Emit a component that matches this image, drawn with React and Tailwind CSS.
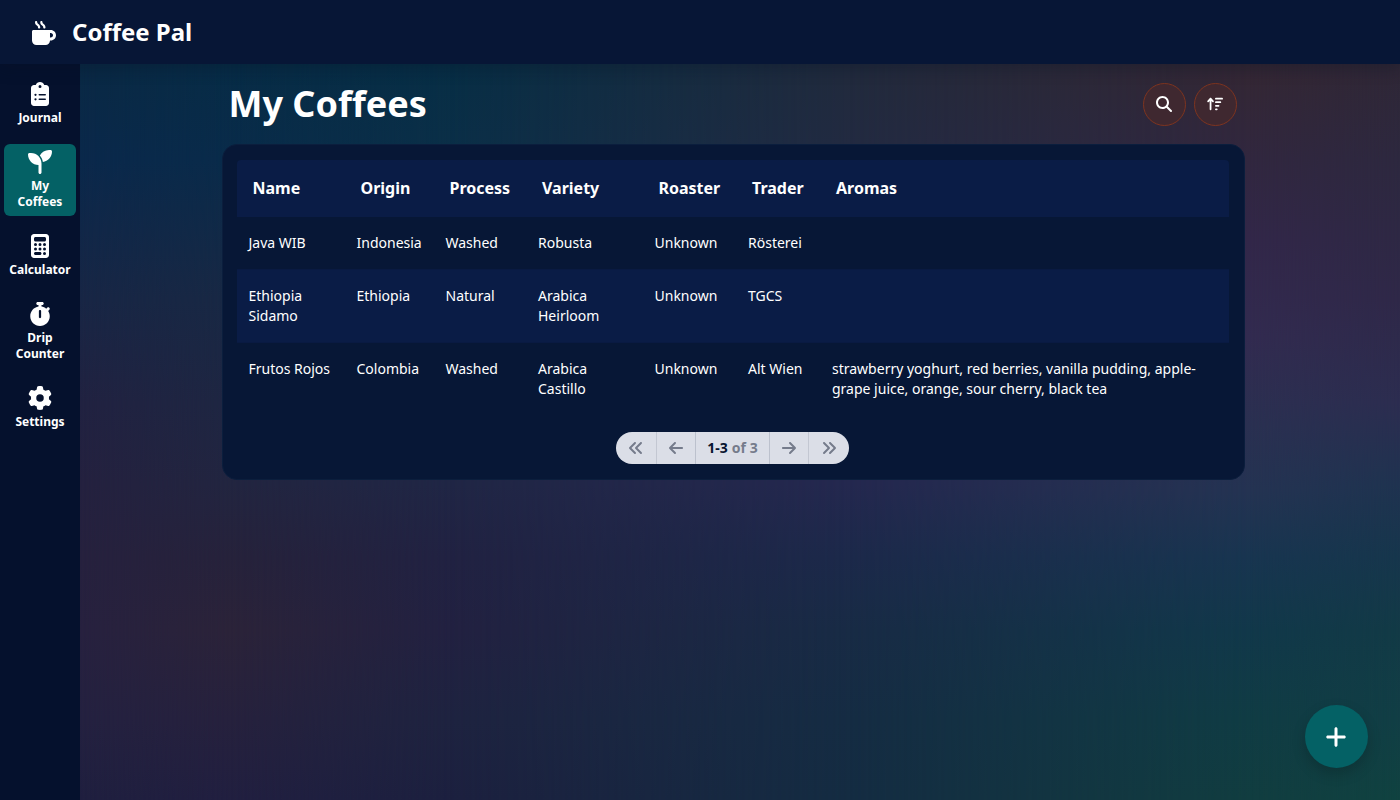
import React from "react";
import {
  FaMugHot, FaClipboardList, FaSeedling, FaCalculator, FaStopwatch, FaGear,
  FaMagnifyingGlass, FaArrowUpWideShort, FaAnglesLeft, FaAnglesRight,
  FaArrowLeft, FaArrowRight, FaPlus,
} from "react-icons/fa6";

const nav = [
  { label: "Journal", Icon: FaClipboardList },
  { label: "My Coffees", Icon: FaSeedling, active: true },
  { label: "Calculator", Icon: FaCalculator },
  { label: "Drip Counter", Icon: FaStopwatch },
  { label: "Settings", Icon: FaGear },
];

const columns = ["Name", "Origin", "Process", "Variety", "Roaster", "Trader", "Aromas"];

const rows = [
  ["Java WIB", "Indonesia", "Washed", "Robusta", "Unknown", "Rösterei", ""],
  ["Ethiopia Sidamo", "Ethiopia", "Natural", "Arabica Heirloom", "Unknown", "TGCS", ""],
  ["Frutos Rojos", "Colombia", "Washed", "Arabica Castillo", "Unknown", "Alt Wien",
    "strawberry yoghurt, red berries, vanilla pudding, apple-grape juice, orange, sour cherry, black tea"],
];

// Vertical washes, each faded in from the left over the previous one.
const washes = [
  "bg-[linear-gradient(#0a2944,#0a284b_13%,#182645_32%,#212241_46%,#24213f_57%,#26213e_67%,#27213f_77%,#242140_89%,#1f1f3f)]",
  "bg-[linear-gradient(#072c46,#092b4a_13%,#182844_32%,#1e2642_46%,#222540_57%,#26223b_67%,#2b2339_77%,#26213d_89%,#211f40)] [mask-image:linear-gradient(to_right,transparent,black_11.4%)]",
  "bg-[linear-gradient(#072e45,#0b2f48_13%,#182a46_32%,#1e2846_46%,#202645_57%,#212242_67%,#222141_77%,#1e2340_89%,#1c203f)] [mask-image:linear-gradient(to_right,transparent_11.4%,black_28%)]",
  "bg-[linear-gradient(#212a3c,#222a42_13%,#24294a_32%,#25284e_46%,#24284f_57%,#1c294a_67%,#182b45_77%,#152c43_89%,#142c42)] [mask-image:linear-gradient(to_right,transparent_28%,black_58.3%)]",
  "bg-[linear-gradient(#342733,#31273f_13%,#322749_24%,#322b50_37%,#2a3051_49%,#243352_58%,#183550_67%,#11384a_77%,#103c44_89%,#113d40)] [mask-image:linear-gradient(to_right,transparent_58.3%,black_88.6%)]",
  "bg-[linear-gradient(#2f2736,#2d283f_13%,#2f2848_32%,#2c2d50_46%,#1f3350_57%,#16364c_67%,#123a46_77%,#113e45_89%,#104240)] [mask-image:linear-gradient(to_right,transparent_88.6%,black)]",
];

const grid = "grid grid-cols-[108px_89px_92.5px_116.5px_93.5px_84px_minmax(0,1fr)]";

function NavItem({ label, Icon, active }) {
  return (
    <a className={`flex flex-col items-center gap-1 rounded-md py-1.5 text-center text-xs leading-4 font-bold ${active ? "bg-[#046165]" : ""}`}>
      <Icon className="size-6" />
      <span className={label.includes(" ") ? "w-14" : "whitespace-nowrap"}>{label}</span>
    </a>
  );
}

function RoundButton({ Icon }) {
  return (
    <button className="flex size-[43px] items-center justify-center rounded-full border border-[#7e341f] bg-[#3f2830] pr-px pb-px">
      <Icon className="size-4" />
    </button>
  );
}

function PageButton({ Icon, className }) {
  return (
    <button className={`flex items-center justify-center text-[#757b8b] ${className}`}>
      <Icon className="size-4" />
    </button>
  );
}

export default function App() {
  return (
    <div className="flex h-[800px] flex-col overflow-hidden bg-[#1c2641] font-['Noto_Sans',sans-serif] text-white">
      <header className="z-10 flex h-16 shrink-0 items-center gap-4 bg-[#071636] pl-8 shadow-[0_5px_14px_rgba(5,15,35,0.3)]">
        <FaMugHot className="mt-0.5 size-6" />
        <span className="text-2xl leading-8 font-bold">Coffee Pal</span>
      </header>
      <div className="flex min-h-0 flex-1">
        <nav className="flex w-20 shrink-0 flex-col gap-3 bg-[#05112d] px-1 pt-3">
          {nav.map((item) => <NavItem key={item.label} {...item} />)}
        </nav>
        <main className="relative isolate flex flex-1 flex-col items-center pr-[14px]">
          {washes.map((w, i) => <div key={i} className={`absolute inset-0 -z-10 ${w}`} />)}
          <div className="flex w-[1023px] items-start justify-between pt-[19px] pr-[7.5px] pl-[7px]">
            <h1 className="text-4xl leading-[42px] font-bold">My Coffees</h1>
            <div className="flex gap-2">
              <RoundButton Icon={FaMagnifyingGlass} />
              <RoundButton Icon={FaArrowUpWideShort} />
            </div>
          </div>
          <section className="mt-[18px] flex w-[1023px] flex-col items-center rounded-[15px] border border-[#0b1e3d] bg-[#071736] px-3.5 pt-[15px] pb-[15px]">
            <div className="w-[992px]">
              <div className={`${grid} h-[57px] items-center rounded-t bg-[#0a1c46] pb-0.5 pl-[15.5px] text-base font-bold`}>
                {columns.map((c) => <div key={c}>{c}</div>)}
              </div>
              {rows.map((row, i) => (
                <div key={row[0]} className={`${grid} pt-4 pr-3 pb-4 pl-[11.5px] text-sm leading-5 ${i === 1 ? "border-y border-[#091a42] bg-[#0a1c46]" : ""}`}>
                  {row.map((cell, j) => <div key={j} className="pr-6 last:pr-0">{cell}</div>)}
                </div>
              ))}
            </div>
            <div className="mt-[17px] mr-px flex h-8 w-[233px] overflow-hidden rounded-full bg-[#dbdee7] text-sm font-bold">
              <PageButton Icon={FaAnglesLeft} className="w-10" />
              <PageButton Icon={FaArrowLeft} className="w-[39px] border-l border-[#c3c7d2]" />
              <div className="flex w-[75px] items-center justify-center gap-1 border-x border-[#bcc1cd] whitespace-nowrap text-[#757b8b]">
                <span className="text-[#07142f]">1-3</span> of 3
              </div>
              <PageButton Icon={FaArrowRight} className="w-[38px]" />
              <PageButton Icon={FaAnglesRight} className="w-[41px] border-l border-[#c3c7d2]" />
            </div>
          </section>
        </main>
      </div>
      <button className="fixed right-8 bottom-8 flex size-[63px] items-center justify-center rounded-full bg-[#046165] pr-px shadow-[0_6px_14px_rgba(0,0,0,0.18)]">
        <FaPlus className="size-6" />
      </button>
    </div>
  );
}
